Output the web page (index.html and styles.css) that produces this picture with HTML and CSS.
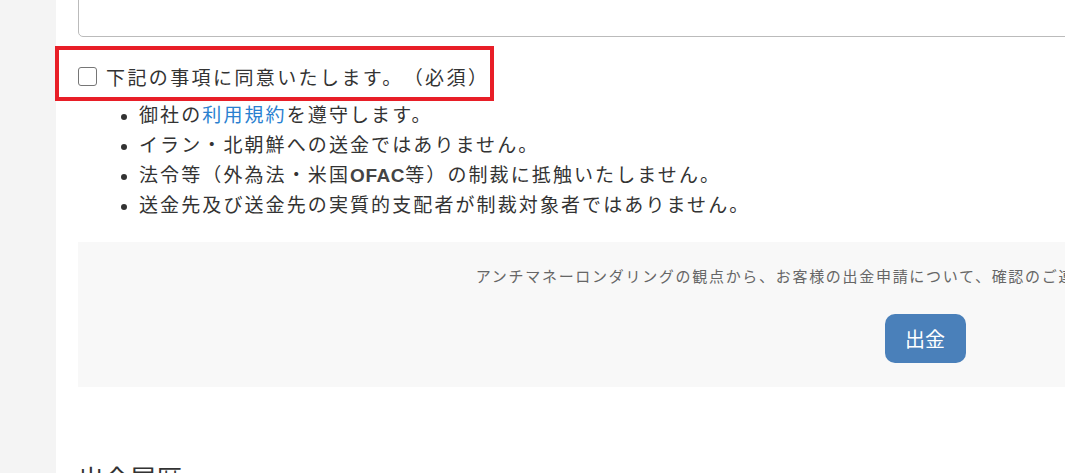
FILE: index.html
```html
<!DOCTYPE html>
<html lang="ja">
<head>
    <meta charset="UTF-8">
    <meta name="viewport" content="width=device-width, initial-scale=1.0">
    <title>出金申請</title>
    <link rel="stylesheet" href="styles.css">
</head>
<body>
    <div class="sidebar"></div>

    <div class="main">
        <div class="memo"></div>

        <div class="agree">
            <span class="highlight"></span>
            <input type="checkbox" id="agree">
            <label for="agree">下記の事項に同意いたします。（必須）</label>
        </div>
        <ul class="terms">
            <li>御社の<a href="#">利用規約</a>を遵守します。</li>
            <li>イラン・北朝鮮への送金ではありません。</li>
            <li>法令等（外為法・米国<span class="latin">OFAC</span>等）の制裁に抵触いたしません。</li>
            <li>送金先及び送金先の実質的支配者が制裁対象者ではありません。</li>
        </ul>

        <div class="submit-box">
            <p class="notice">アンチマネーロンダリングの観点から、お客様の出金申請について、確認のご連絡をさせていただく場合がございます。</p>
            <button class="btn-submit">出金</button>
        </div>

        <h2 class="history-title">出金履歴</h2>
    </div>
</body>
</html>
```

FILE: styles.css
```css
html, body {
    overflow: hidden;
}
body {
    margin: 0;
    display: flex;
    min-height: 100vh;
    font-family: "Liberation Sans", "Noto Sans CJK JP", sans-serif;
    color: #333;
    background: #fff;
    text-spacing-trim: space-all;
}
.sidebar {
    width: 56px;
    flex-shrink: 0;
    background: #f4f4f4;
}
.main {
    flex-shrink: 0;
    width: 1694px;
    padding-left: 22px;
}
.memo {
    height: 56px;
    margin-top: -21px;
    border: 1px solid #bbb;
    border-radius: 0 0 5px 5px;
}
.agree {
    position: relative;
    display: flex;
    align-items: center;
    height: 50px;
    margin-top: 14px;
    font-size: 19px;
    letter-spacing: 2.4px;
}
.highlight {
    position: absolute;
    left: -23px;
    top: -5px;
    width: 431px;
    height: 47px;
    border: 4px solid #e81e27;
    pointer-events: none;
}
.agree input {
    appearance: none;
    width: 19px;
    height: 19px;
    margin: 0 9px 0 0;
    border: 1.5px solid #767676;
    border-radius: 3px;
    background: #fff;
}
.terms {
    margin: 0;
    padding-left: 61px;
    font-size: 19px;
    letter-spacing: 2.1px;
    line-height: 30px;
}
.terms .latin {
    letter-spacing: 0.6px;
    font-weight: bold;
    color: #444;
}
.terms a {
    color: #2a80d0;
    text-decoration: none;
}
.submit-box {
    margin-top: 21px;
    padding: 24px 0;
    background: #f8f8f8;
    text-align: center;
}
.notice {
    margin: 0;
    font-size: 15px;
    letter-spacing: 1.7px;
    line-height: 22px;
    color: #666;
}
.btn-submit {
    margin-top: 26px;
    width: 81px;
    height: 49px;
    border: none;
    border-radius: 10px;
    background: #4a80ba;
    color: #fff;
    font-family: inherit;
    font-size: 20px;
    cursor: pointer;
}
.history-title {
    margin: 78px 0 0;
    font-size: 26px;
    font-weight: normal;
    line-height: 1.2;
}
```
